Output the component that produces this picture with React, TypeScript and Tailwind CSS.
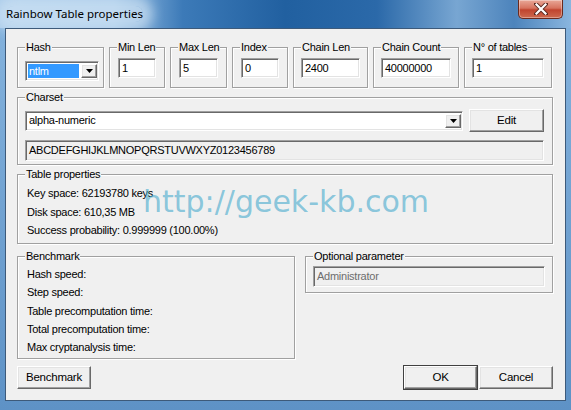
import React from "react";

const FONT = "font-['Liberation_Sans',Arial,sans-serif]";

function GroupBox({ label, className = "", children }: { label: string; className?: string; children?: React.ReactNode }) {
  return (
    <div className={`relative border border-[#a0a0a0] shadow-[inset_1px_1px_0_#ffffff,1px_1px_0_#ffffff] ${className}`}>
      <span className="absolute -top-[8px] left-[7px] bg-[#f0f0f0] px-[1px] text-[11px] leading-[14px] text-black whitespace-nowrap">
        {label}
      </span>
      {children}
    </div>
  );
}

const sunken =
  "border border-t-[#a0a0a0] border-l-[#a0a0a0] border-b-white border-r-white shadow-[inset_1px_1px_0_#696969,inset_-1px_-1px_0_#e3e3e3]";
const raised =
  "border border-t-white border-l-white border-b-[#696969] border-r-[#696969] shadow-[inset_-1px_-1px_0_#a0a0a0,inset_1px_1px_0_#e3e3e3]";

function Edit({ value, className = "" }: { value: string; className?: string }) {
  return (
    <div className={`${sunken} bg-white h-[20px] flex items-center pl-[3px] text-[11px] text-black ${className}`}>{value}</div>
  );
}

function DropArrow() {
  return (
    <div className={`${raised} bg-[#f0f0f0] w-[16px] h-full flex items-center justify-center shrink-0`}>
      <svg width="7" height="4" viewBox="0 0 7 4">
        <path d="M0 0H7L3.5 4Z" fill="#000" />
      </svg>
    </div>
  );
}

function Btn({ label, className = "", def = false }: { label: string; className?: string; def?: boolean }) {
  return (
    <div className={`${def ? "outline outline-1 outline-[#404040]" : ""} ${raised} bg-[#f0f0f0] h-[23px] flex items-center justify-center text-[11.5px] text-black ${className}`}>
      {label}
    </div>
  );
}

export default function App() {
  return (
    <div className={`${FONT} tracking-[-0.25px] relative w-[571px] h-[410px] overflow-hidden flex flex-col bg-[linear-gradient(to_bottom,#86b4de,#5e92c6)]`}>
      {/* title bar */}
      <div className="h-[28px] shrink-0 flex items-start justify-between bg-[linear-gradient(to_right,#a9cbea_0%,#9dc3e6_20%,#3c7ab8_32%,#2160a0_50%,#2b69a9_66%,#78a6d2_80%,#4d84bc_90%,#8ab6df_100%)]">
        <div className="h-[28px] flex items-center pl-[6px]">
          <span className="rounded-full bg-[#cfe2f3]/70 shadow-[0_0_12px_10px_rgba(207,226,243,0.7)] font-['Noto_Sans','Open_Sans',sans-serif] tracking-normal text-[11.5px] leading-[16px] text-black">
            Rainbow Table properties
          </span>
        </div>
        <div className="mr-[8px] w-[45px] h-[19px] rounded-b-[5px] border border-t-0 border-[#6b2a1e] bg-[linear-gradient(to_bottom,#e9a898_0%,#d7735f_45%,#c0442e_55%,#cd6a4f_100%)] flex items-center justify-center shadow-[inset_0_0_0_1px_rgba(255,255,255,0.35)]">
          <svg width="14" height="12" viewBox="0 0 14 12">
            <path d="M2 1L12 11M12 1L2 11" stroke="#5a2a22" strokeWidth="4" strokeLinecap="square" />
            <path d="M2.5 1.5L11.5 10.5M11.5 1.5L2.5 10.5" stroke="#ffffff" strokeWidth="2.2" strokeLinecap="square" />
          </svg>
        </div>
      </div>

      {/* body with frame */}
      <div className="flex-1 flex px-[5px] pb-[9px]">
        <div className="flex-1 flex flex-col bg-[#f0f0f0] border border-[#3d5a7a] pl-[11px] pr-[12px] pt-[18px]">
          {/* row 1 */}
          <div className="flex gap-[5px]">
            <GroupBox label="Hash" className="w-[87px] h-[41px] pt-[13px] pl-[7px] pr-[4px]">
              <div className={`${sunken} bg-white h-[20px] flex items-stretch p-[2px] pr-[1px]`}>
                <div className="flex-1 bg-[#3399ff] text-white text-[11px] flex items-center pl-[1px] mr-[2px]">ntlm</div>
                <DropArrow />
              </div>
            </GroupBox>
            <GroupBox label="Min Len" className="w-[56px] h-[41px] pt-[10px] px-[8px]">
              <Edit value="1" />
            </GroupBox>
            <GroupBox label="Max Len" className="w-[57px] h-[41px] pt-[10px] px-[8px]">
              <Edit value="5" />
            </GroupBox>
            <GroupBox label="Index" className="w-[56px] h-[41px] pt-[10px] px-[8px]">
              <Edit value="0" />
            </GroupBox>
            <GroupBox label="Chain Len" className="w-[75px] h-[41px] pt-[10px] px-[7px]">
              <Edit value="2400" />
            </GroupBox>
            <GroupBox label="Chain Count" className="w-[86px] h-[41px] pt-[10px] px-[7px]">
              <Edit value="40000000" />
            </GroupBox>
            <GroupBox label="N° of tables" className="w-[88px] h-[41px] pt-[10px] px-[7px]">
              <Edit value="1" />
            </GroupBox>
          </div>

          {/* charset */}
          <GroupBox label="Charset" className="mt-[9px] h-[68px] pt-[11px] pl-[7px] pr-[8px]">
            <div className="flex items-center gap-[6px]">
              <div className={`${sunken} bg-white h-[20px] flex-1 flex items-stretch p-[2px] pr-[1px]`}>
                <div className="flex-1 text-[11px] text-black flex items-center pl-[1px]">alpha-numeric</div>
                <DropArrow />
              </div>
              <Btn label="Edit" className="w-[75px] h-[22px]" />
            </div>
            <div className={`${sunken} mt-[8px] h-[21px] bg-[#f0f0f0] flex items-center pl-[3px] text-[11px] text-black`}>
              ABCDEFGHIJKLMNOPQRSTUVWXYZ0123456789
            </div>
          </GroupBox>

          {/* table properties */}
          <GroupBox label="Table properties" className="mt-[9px] h-[70px] pt-[9px] pl-[9px] text-[11px] leading-[18.5px] text-black">
            <div>Key space: 62193780 keys</div>
            <div>Disk space: 610,35 MB</div>
            <div>Success probability: 0.999999 (100.00%)</div>
          </GroupBox>

          {/* bottom groups */}
          <div className="mt-[12px] flex items-start gap-[10px]">
            <GroupBox label="Benchmark" className="w-[278px] h-[103px] pt-[8px] pl-[9px] text-[11px] leading-[18.3px] text-black">
              <div>Hash speed:</div>
              <div>Step speed:</div>
              <div>Table precomputation time:</div>
              <div>Total precomputation time:</div>
              <div>Max cryptanalysis time:</div>
            </GroupBox>
            <GroupBox label="Optional parameter" className="flex-1 h-[37px] pt-[9px] px-[7px]">
              <div className={`${sunken} h-[21px] bg-[#f0f0f0] flex items-center pl-[3px] text-[11px] text-[#6d6d6d]`}>Administrator</div>
            </GroupBox>
          </div>

          {/* buttons */}
          <div className="mt-[7px] flex items-center">
            <Btn label="Benchmark" className="w-[74px]" />
            <div className="flex-1" />
            <Btn label="OK" def className="w-[73px]" />
            <Btn label="Cancel" className="w-[74px] ml-[2px]" />
          </div>
        </div>
      </div>

      {/* watermark */}
      <div className="absolute left-[143px] top-[184px] font-['DejaVu_Sans',sans-serif] tracking-normal text-[30px] leading-[36px] text-[rgba(70,170,205,0.62)] pointer-events-none">
        http://geek-kb.com
      </div>
    </div>
  );
}
